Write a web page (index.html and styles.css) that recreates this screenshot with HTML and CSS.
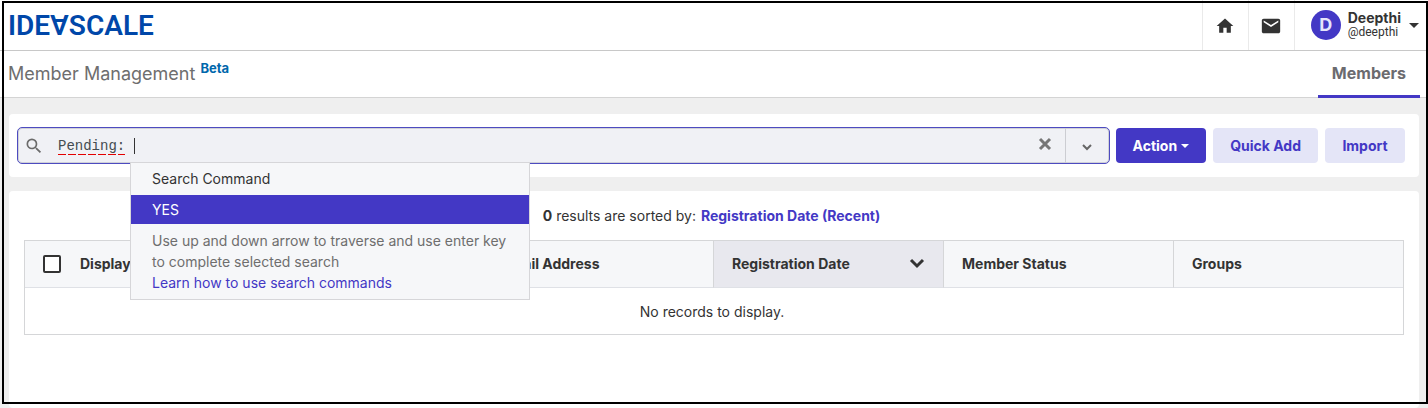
FILE: index.html
```
<!DOCTYPE html>
<html lang="en">
<head>
    <meta charset="UTF-8">
    <meta name="viewport" content="width=device-width, initial-scale=1.0">
    <title>Member Management</title>
    <link rel="stylesheet" href="styles.css">
</head>
<body>
    <header class="topbar">
        <a href="#" class="logo" aria-label="IdeaScale">IDE<span class="flip">A</span>SCALE</a>
        <nav class="topnav">
            <a href="#" class="nav-icon" aria-label="Home">
                <svg width="20" height="20" viewBox="0 0 24 24"><path d="M10 20v-6h4v6h5v-8h3L12 3 2 12h3v8z"/></svg>
            </a>
            <a href="#" class="nav-icon" aria-label="Messages">
                <svg width="22" height="22" viewBox="0 0 24 24"><path d="M20 4H4c-1.100 0-2 .9-2 2v12c0 1.100.9 2 2 2h16c1.100 0 2-.9 2-2V6c0-1.100-.9-2-2-2zm0 4l-8 5-8-5V6l8 5 8-5z"/></svg>
            </a>
            <button type="button" class="profile">
                <span class="avatar">D</span>
                <span class="who">
                    <strong>Deepthi</strong>
                    <span class="handle">@deepthi</span>
                </span>
                <span class="caret"></span>
            </button>
        </nav>
    </header>

    <div class="subbar">
        <h1>Member Management <sup>Beta</sup></h1>
        <a href="#" class="tab">Members</a>
    </div>

    <main>
        <section class="panel toolbar">
            <div class="search">
                <svg class="search-icon" width="20" height="20" viewBox="0 0 24 24"><path d="M15.5 14h-.79l-.28-.27A6.471 6.471 0 0 0 16 9.5 6.5 6.5 0 1 0 9.5 16c1.61 0 3.09-.59 4.23-1.57l.27.28v.79l5 4.99L20.49 19l-4.99-5zm-6 0C7.01 14 5 11.99 5 9.5S7.01 5 9.5 5 14 7.01 14 9.5 11.99 14 9.5 14z"/></svg>
                <input type="text" class="query" value="Pending:" aria-label="Search members" spellcheck="false">
                <span class="cursor"></span>
                <button type="button" class="clear" aria-label="Clear search">
                    <svg width="14" height="14" viewBox="0 0 14 14"><path d="M2 2l10 10M12 2L2 12"/></svg>
                </button>
                <button type="button" class="expand" aria-label="Search options">
                    <svg width="12" height="8" viewBox="0 0 12 8"><path d="M2 2l4 4 4-4"/></svg>
                </button>

                <div class="suggest">
                    <div class="suggest-title">Search Command</div>
                    <button type="button" class="suggest-item">YES</button>
                    <div class="suggest-help">
                        Use up and down arrow to traverse and use enter key to complete selected search<br>
                        <a href="#">Learn how to use search commands</a>
                    </div>
                </div>
            </div>
            <div class="actions">
                <button type="button" class="btn btn-primary">Action<span class="caret"></span></button>
                <button type="button" class="btn">Quick Add</button>
                <button type="button" class="btn">Import</button>
            </div>
        </section>

        <section class="panel results">
            <p class="summary"><strong>0</strong> results are sorted by: <a href="#">Registration Date (Recent)</a></p>
            <table>
                <colgroup>
                    <col class="col-check">
                    <col>
                    <col class="col">
                    <col class="col">
                    <col class="col">
                    <col class="col">
                </colgroup>
                <thead>
                    <tr>
                        <th class="check"><input type="checkbox" aria-label="Select all members"></th>
                        <th class="name">Display Name</th>
                        <th>Email Address</th>
                        <th class="sorted">
                            <div class="sort">
                                Registration Date
                                <svg width="16" height="12" viewBox="0 0 16 12"><path d="M2 2l6 6 6-6"/></svg>
                            </div>
                        </th>
                        <th>Member Status</th>
                        <th>Groups</th>
                    </tr>
                </thead>
                <tbody>
                    <tr>
                        <td colspan="6">No records to display.</td>
                    </tr>
                </tbody>
            </table>
        </section>
    </main>

    <div class="frame"></div>
</body>
</html>
```
FILE: styles.css
```
* {
    box-sizing: border-box;
}
body {
    margin: 0;
    min-height: 100vh;
    display: flex;
    flex-direction: column;
    background: #efefef;
    color: #333;
    font-family: Inter, "Liberation Sans", sans-serif;
    font-size: 14px;
    line-height: 21px;
}
a {
    color: #4338c5;
    text-decoration: none;
}
button {
    font: inherit;
    border: none;
    background: none;
    padding: 0;
    cursor: pointer;
}

/* Header */
.topbar {
    display: flex;
    justify-content: space-between;
    height: 51px;
    padding: 0 9px 0 8px;
    background: #fff;
    border-bottom: 1px solid #c8c8c8;
}
.logo {
    padding-top: 12px;
    color: #0047a9;
    font-family: Roboto, sans-serif;
    font-size: 28px;
    font-weight: 600;
    line-height: 28px;
}
.flip {
    display: inline-block;
    transform: rotate(180deg);
    transform-origin: 50% 46%;
}
.topnav {
    display: flex;
}
.nav-icon {
    display: flex;
    align-items: center;
    justify-content: center;
    width: 46px;
    padding-top: 2px;
    border-left: 1px solid #eaeaea;
    fill: #333;
}
.profile {
    display: flex;
    align-items: center;
    padding-left: 16px;
    border-left: 1px solid #eaeaea;
    color: #333;
    text-align: left;
}
.avatar {
    width: 30px;
    height: 30px;
    margin-right: 7px;
    border-radius: 50%;
    background: #4338c5;
    color: #e6e5fa;
    font-size: 18px;
    font-weight: 700;
    line-height: 30px;
    text-align: center;
}
.who {
    display: flex;
    flex-direction: column;
    line-height: 15px;
}
.handle {
    font-family: Roboto, sans-serif;
    font-size: 12px;
}
.caret {
    border: 5px solid transparent;
    border-top-color: currentColor;
    border-bottom: none;
}
.profile .caret {
    margin-left: 8px;
}

/* Page title and tabs */
.subbar {
    display: flex;
    justify-content: space-between;
    height: 47px;
    padding: 0 8px;
    background: #fff;
    border-bottom: 1px solid #d4d4d4;
}
h1 {
    margin: 0;
    color: #6e6e6e;
    font-size: 18px;
    font-weight: 400;
    line-height: 46px;
}
h1 sup {
    color: #0067ac;
    font-size: 13px;
    font-weight: 700;
    line-height: 0;
}
.tab {
    height: 47px;
    padding: 0 14px;
    border-bottom: 3px solid #4338c5;
    color: #6b6b6f;
    font-size: 16px;
    font-weight: 700;
    line-height: 45px;
}

/* Panels */
main {
    flex: 1;
    display: flex;
    flex-direction: column;
    gap: 14px;
    padding: 16px 9px 0;
}
.panel {
    background: #fff;
    border-radius: 4px;
}
.toolbar {
    display: flex;
    align-items: center;
    gap: 6px;
    padding: 13px 14px 13px 8px;
}
.search {
    position: relative;
    flex: 1;
    display: flex;
    align-items: center;
    height: 37px;
    border: 1px solid #4d4bc0;
    border-radius: 5px;
    background: #f0f1f5;
    box-shadow: inset 0 0 0 1px #d0d1d8;
}
.search-icon {
    margin-left: 6px;
    fill: #6b6b6b;
}
.query {
    width: 67px;
    height: 18px;
    margin-left: 14px;
    padding: 0;
    border: none;
    background: repeating-linear-gradient(90deg, #e30000 0 8px, transparent 8px 10px) bottom / 100% 1px no-repeat;
    color: #444c50;
    font-family: "Courier New", "Liberation Mono", monospace;
    font-size: 14px;
    outline: none;
}
.cursor {
    width: 1px;
    height: 16px;
    margin-left: 9px;
    background: #333;
}
.clear {
    display: flex;
    margin-left: auto;
    margin-right: 13px;
    padding-bottom: 3px;
}
.clear svg {
    fill: none;
    stroke: #767676;
    stroke-width: 3;
}
.expand {
    align-self: stretch;
    width: 44px;
    border-left: 1px solid #cccdd2;
}
.expand svg {
    fill: none;
    stroke: #666;
    stroke-width: 2;
}

/* Search command menu */
.suggest {
    position: absolute;
    top: 34px;
    left: 112px;
    z-index: 2;
    width: 400px;
    border: 1px solid #d6d6d9;
    background: #f6f7f9;
}
.suggest-title {
    padding: 5px 21px 6px;
}
.suggest-item {
    display: block;
    width: 100%;
    padding: 4px 21px;
    background: #4338c5;
    color: #fff;
    text-align: left;
}
.suggest-help {
    padding: 6px 21px;
    color: #6e6e6e;
}

/* Buttons */
.actions {
    display: flex;
    gap: 7px;
}
.btn {
    min-width: 80px;
    height: 35px;
    padding: 0 17px;
    border-radius: 4px;
    background: #e4e5f7;
    color: #4338c5;
    font-weight: 700;
}
.btn-primary {
    display: flex;
    align-items: center;
    gap: 4px;
    background: #4338c5;
    color: #fff;
}
.btn .caret {
    border-width: 4px 4px 0;
}

/* Results */
.results {
    flex: 1;
    padding: 14px 15px;
}
.summary {
    margin: 0 0 14px;
    padding-right: 5px;
    text-align: center;
}
.summary a {
    margin-left: 1px;
    font-weight: 700;
}
table {
    width: 100%;
    border: 1px solid #d5d6d8;
    border-collapse: separate;
    border-spacing: 0;
    table-layout: fixed;
}
.col-check {
    width: 37px;
}
.col {
    width: 230px;
}
th {
    height: 47px;
    padding: 0 18px 1px;
    border-bottom: 1px solid #dfe1e6;
    border-left: 1px solid #d5d6d8;
    background: #f6f7f9;
    font-weight: 700;
    text-align: left;
}
th.check,
th.name {
    border-left: none;
}
th.check {
    padding-right: 0;
}
th.sorted {
    background: #e8e8ee;
}
.sort {
    display: flex;
    align-items: center;
    justify-content: space-between;
}
.sort svg {
    fill: none;
    stroke: #333;
    stroke-width: 3;
}
th input {
    appearance: none;
    display: block;
    width: 18px;
    height: 18px;
    margin: 0;
    border: 2px solid #333;
    border-radius: 2px;
    background: #fff;
}
td {
    height: 46px;
    padding: 0 22px 0 18px;
    text-align: center;
}

/* Outline drawn over the whole page */
.frame {
    position: fixed;
    top: 1px;
    right: 0;
    bottom: 4px;
    left: 2px;
    z-index: 5;
    border: 2px solid #000;
    pointer-events: none;
}
```
